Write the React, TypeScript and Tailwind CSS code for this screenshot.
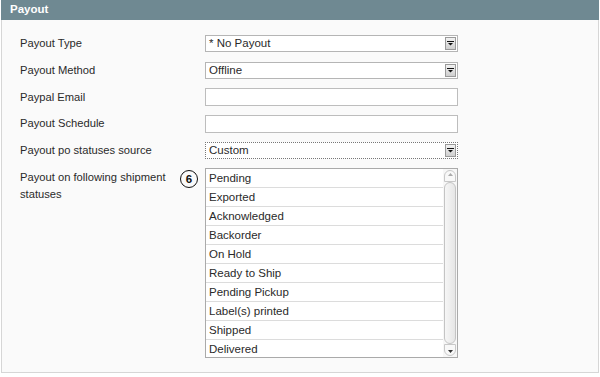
import React from "react";

const statuses = [
  "Pending",
  "Exported",
  "Acknowledged",
  "Backorder",
  "On Hold",
  "Ready to Ship",
  "Pending Pickup",
  "Label(s) printed",
  "Shipped",
  "Delivered",
];

const Arrow = () => (
  <span className="flex h-[13px] w-[11px] items-center justify-center border border-[#9a9a9a] bg-gradient-to-b from-[#f2f2f2] to-[#cfcfcf]">
    <svg width="7" height="5" viewBox="0 0 7 5">
      <rect x="0" y="0" width="7" height="1" fill="#111" />
      <path d="M1 2h5L3.5 4.5z" fill="#111" />
    </svg>
  </span>
);

const Select = ({ value, focus }: { value: string; focus?: boolean }) => (
  <div
    className={
      "flex h-[17px] w-[253px] items-center justify-between bg-white pl-[3px] pr-[1px] " +
      (focus ? "border border-dotted border-[#777]" : "border border-[#b5b5b5]")
    }
  >
    <span className="text-[11.5px] leading-none text-[#2a2a2a]">{value}</span>
    <Arrow />
  </div>
);

const Input = () => <div className="h-[18px] w-[253px] border border-[#bdbdbd] bg-white" />;

const Row = ({ label, children }: { label: string; children: React.ReactNode }) => (
  <div className="flex h-[18px] items-center">
    <div className="w-[185px] text-[11.2px] text-[#2a2a2a]">{label}</div>
    {children}
  </div>
);

export default function App() {
  return (
    <div className="h-[377px] w-[600px] bg-white font-['Liberation_Sans',Arial,sans-serif]">
      <div className="mx-[1px] flex h-[20px] items-center bg-[#6f8992] pl-[9px] text-[11.5px] font-bold text-white">
        Payout
      </div>
      <div className="mx-[1px] h-[353px] border border-t-0 border-[#d6d6d6] bg-[#fafafa] pl-[18px] pt-[14.5px]">
        <div className="flex flex-col gap-[8.75px]">
          <Row label="Payout Type">
            <Select value="* No Payout" />
          </Row>
          <Row label="Payout Method">
            <Select value="Offline" />
          </Row>
          <Row label="Paypal Email">
            <Input />
          </Row>
          <Row label="Payout Schedule">
            <Input />
          </Row>
          <Row label="Payout po statuses source">
            <Select value="Custom" focus />
          </Row>
          <div className="flex items-start">
            <div className="w-[160px] pt-[1px] text-[11.2px] leading-[17px] text-[#2a2a2a]">
              Payout on following shipment statuses
            </div>
            <div className="mt-[2px] flex h-[18px] w-[18px] items-center justify-center rounded-full border border-[#111] text-[11.5px] font-semibold text-[#111]">
              6
            </div>
            <div className="ml-[7px] flex h-[190px] w-[253px] border border-[#aaa] bg-white">
              <div className="flex-1">
                {statuses.map((s) => (
                  <div
                    key={s}
                    className="flex h-[19px] items-center border-b border-[#dcdcdc] pl-[3px] text-[11.5px] text-[#2a2a2a] last:border-b-0"
                  >
                    {s}
                  </div>
                ))}
              </div>
              <div className="flex w-[14px] flex-col items-center bg-[#f7f7f7] py-[1px]">
                <div className="flex h-[12px] w-[12px] items-start justify-center rounded-t-full border border-[#c8c8c8] bg-[#f8f8f8] pt-[2px]">
                  <svg width="5" height="3" viewBox="0 0 5 3">
                    <path d="M2.5 0L5 3H0z" fill="#aaa" />
                  </svg>
                </div>
                <div className="w-[12px] flex-1 rounded-full border border-[#c4c4c4] bg-gradient-to-r from-[#f6f6f6] to-[#e6e6e6]" />
                <div className="flex h-[12px] w-[12px] items-end justify-center rounded-b-full border border-[#c8c8c8] bg-[#f8f8f8] pb-[2px]">
                  <svg width="5" height="3" viewBox="0 0 5 3">
                    <path d="M0 0h5L2.5 3z" fill="#333" />
                  </svg>
                </div>
              </div>
            </div>
          </div>
        </div>
      </div>
    </div>
  );
}
